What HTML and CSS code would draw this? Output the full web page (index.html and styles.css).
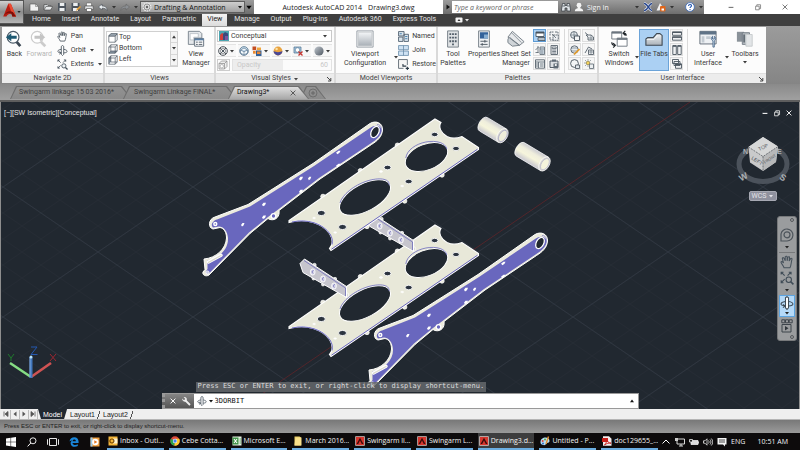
FILE: index.html
```html
<!DOCTYPE html>
<html lang="en">
<head>
<meta charset="utf-8">
<title>Autodesk AutoCAD 2014</title>
<link rel="stylesheet" href="styles.css">
</head>
<body>
<svg class="sprite" aria-hidden="true">
  <defs>
    <linearGradient id="steel" x1="0" y1="0" x2="0" y2="1"><stop offset="0" stop-color="#f4f6f8"/><stop offset="1" stop-color="#a9b0b7"/></linearGradient>
    <linearGradient id="ball" x1="0" y1="0" x2="1" y2="1"><stop offset="0" stop-color="#c3cad1"/><stop offset="1" stop-color="#4d5660"/></linearGradient>
    <linearGradient id="tube" x1="0" y1="0" x2="0" y2="1"><stop offset="0" stop-color="#c9c9cf"/><stop offset=".3" stop-color="#efeedd"/><stop offset=".6" stop-color="#f6f5dc"/><stop offset="1" stop-color="#c6c5cf"/></linearGradient>
    <pattern id="minor" x="288" y="122" width="38" height="26" patternUnits="userSpaceOnUse"><path d="M0 0L38 26M0 26L38 0" stroke="#262d37" stroke-width=".7"/></pattern>
    <pattern id="major" x="288" y="122" width="190" height="130" patternUnits="userSpaceOnUse"><path d="M0 0L190 130M0 130L190 0" stroke="#2f3741" stroke-width=".9"/></pattern>
  </defs>
  <symbol id="caret" viewBox="0 0 6 6"><path d="M1 2h4L3 4.6z" fill="currentColor"/></symbol>
  <symbol id="caret-up" viewBox="0 0 6 6"><path d="M1 4.2h4L3 1.6z" fill="currentColor"/></symbol>
  <symbol id="new" viewBox="0 0 10 10"><path d="M1 2h5.500l3 2.500V9H1z" fill="#f2f2f2" stroke="#555" stroke-width=".6"/><path d="M6.500 2v2.500h3" fill="none" stroke="#777" stroke-width=".6"/></symbol>
  <symbol id="open" viewBox="0 0 10 10"><path d="M1 8V2.500h3l1 1h3V5" fill="#d5d8da" stroke="#444" stroke-width=".6"/><path d="M1 8l2-3.500h6.700L7.600 8z" fill="#e8eaeb" stroke="#444" stroke-width=".6"/></symbol>
  <symbol id="save" viewBox="0 0 10 10"><path d="M1 1h8v8H1z" fill="#4c545d"/><path d="M2.800 1h4.500v3H2.800zM2.500 6h5v3h-5z" fill="#eceff1"/></symbol>
  <symbol id="saveas" viewBox="0 0 10 10"><path d="M.5 1h8v8h-8z" fill="#4c545d"/><path d="M2.200 1h4.500v3H2.200zM2 6h5v3H2z" fill="#eceff1"/><path d="M5 9l1-2.500L9 4l1 1-3 3z" fill="#e6a03a"/></symbol>
  <symbol id="print" viewBox="0 0 10 10"><path d="M2.500 1h5v3h-5z" fill="#fff" stroke="#555" stroke-width=".5"/><path d="M.8 4h8.400v3.500H.8z" fill="#e3e5e7" stroke="#444" stroke-width=".6"/><path d="M2.500 6.500h5V9.500h-5z" fill="#fff" stroke="#444" stroke-width=".6"/></symbol>
  <symbol id="undo" viewBox="0 0 10 10"><path d="M.5 5L4 2v2c3 0 5 1 5 4.500C8 6.700 6.500 6.200 4 6.200V8z" fill="#e9edf0" stroke="#454c54" stroke-width=".6"/></symbol>
  <symbol id="redo" viewBox="0 0 10 10"><path d="M9.500 5L6 2v2C3 4 1 5 1 8.500 2 6.700 3.500 6.200 6 6.200V8z" fill="#8b8f93" stroke="#666" stroke-width=".6"/></symbol>
  <symbol id="gear" viewBox="0 0 10 10"><circle cx="5" cy="5" r="3.700" fill="none" stroke="#f0f0f0" stroke-width="1.600" stroke-dasharray="1.500 .8"/><circle cx="5" cy="5" r="3" fill="#ddd" stroke="#555" stroke-width=".5"/><circle cx="5" cy="5" r="1.200" fill="#666"/></symbol>
  <symbol id="play" viewBox="0 0 6 6"><path d="M1.500.5L5 3 1.500 5.500z" fill="#111"/></symbol>
  <symbol id="binoc" viewBox="0 0 10 10"><path d="M1.500 1.500h2.400v2h2.200v-2h2.400L9.700 9H6V6H4v3H.3z" fill="#dfe3e6" stroke="#343a40" stroke-width=".7"/><path d="M1.500 4h2.500M6 4h2.500" stroke="#343a40" stroke-width=".7"/></symbol>
  <symbol id="user" viewBox="0 0 10 10"><circle cx="5" cy="3.200" r="2.400" fill="#f4f4f4"/><path d="M.8 9.200c0-2.200 2-2.600 2.900-2.900V5h2.600v1.300c.9.300 2.900.7 2.900 2.900z" fill="#f4f4f4"/></symbol>
  <symbol id="xchg" viewBox="0 0 10 10"><path d="M1 1.500c4 0 5 7 8 7M1 8.500c4 0 5-7 8-7" fill="none" stroke="#f0f3ff" stroke-width="2.600"/><path d="M1 1.500c4 0 5 7 8 7M1 8.500c4 0 5-7 8-7" fill="none" stroke="#27468c" stroke-width="1.500"/></symbol>
  <symbol id="a360" viewBox="0 0 10 10"><path d="M.5 8.500L4 1l2 3-2.500 4.500z" fill="#f1f1f1"/><rect x="4" y="4" width="5.500" height="5.500" rx="1" fill="#e0661a"/><path d="M5.500 6.500h2.500v2H5.500z" fill="#fff"/></symbol>
  <symbol id="help" viewBox="0 0 10 10"><circle cx="5" cy="5" r="4.400" fill="#fff" stroke="#3868b8" stroke-width=".8"/><path d="M3.500 4c0-2 3-2 3-.2 0 1-1.500 1.100-1.500 2.200M5 7v1" fill="none" stroke="#1f55b4" stroke-width="1.100"/></symbol>
  <symbol id="min" viewBox="0 0 10 10"><path d="M2 5.500h6" stroke="currentColor" stroke-width="1.400"/></symbol>
  <symbol id="restore" viewBox="0 0 10 10"><path d="M2 4h4.500v4.500H2zM3.500 4V2.200h4.700V7H6.500" fill="none" stroke="currentColor"/></symbol>
  <symbol id="close" viewBox="0 0 10 10"><path d="M2 2l6 6M8 2L2 8" stroke="currentColor" stroke-width="1.200"/></symbol>

  <symbol id="back" viewBox="0 0 20 20"><path d="M12 12l5 6" stroke="#3c4854" stroke-width="3"/><circle cx="9" cy="8" r="6.500" fill="#fff" stroke="#4b5a67" stroke-width="1.300"/><path d="M1 8l6-4.500v2.800h6v3.400H7v2.800z" fill="#1e5a73"/></symbol>
  <symbol id="fwd" viewBox="0 0 20 20"><path d="M11 12l6 6" stroke="#ccc" stroke-width="3"/><circle cx="8" cy="8" r="6.500" fill="#fff" stroke="#ccc" stroke-width="1.300"/><path d="M17 8l-6-4.500v2.800H5v3.400h6v2.800z" fill="#c4c4c4"/></symbol>
  <symbol id="pan" viewBox="0 0 12 12"><path d="M3.500 11C3 9 1 7.500.8 6 1.500 5.200 2.600 6 3 7L2 2.800c.6-1 1.400-.4 1.700.4L4.500 5V1.500c.8-.9 1.600-.4 1.600.4V5l.7-3.200c.8-.7 1.500-.2 1.400.6L7.800 5.200l1.400-2.300c1-.3 1.300.4 1 1.100C9.500 6 9.800 8.500 8.500 11z" fill="var(--palm, #fff)" stroke="#46515b" stroke-width=".9"/></symbol>
  <symbol id="orbit" viewBox="0 0 12 12"><path d="M4.700 1.500L6 .5l1.300 1v8.700L6 11.500l-1.300-1.300z" fill="#fff" stroke="#3f4b56" stroke-width=".9"/><path d="M4.500 4.700C0 5.500-.5 8 4 8.600M7.500 4.700c4.500.8 5 3.600 0 3.900M2.500 7.200l2 1.400-2 1.400" fill="none" stroke="#3f4b56" stroke-width=".9"/></symbol>
  <symbol id="extents" viewBox="0 0 12 12"><path d="M1 1l3 3M1 3V1h2M9.500 1L6.500 4M7.500 1h2v2M1 10l3-3M1 8v2h2" fill="none" stroke="#3f4b56" stroke-width=".9"/><circle cx="7.500" cy="7.500" r="2.300" fill="var(--palm, #eef3f6)" stroke="#3f4b56" stroke-width=".9"/><path d="M9.200 9.200l2.300 2.300" stroke="#3f4b56" stroke-width="1.400"/></symbol>
  <symbol id="cube-top" viewBox="0 0 10 10"><path d="M.8 3l2-2.200h6.400v6.200L7.200 9.200H.8zM.8 3h6.400v6.200M7.200 3l2-2.200" fill="#fff" stroke="#4d5862" stroke-width=".7"/><path d="M.8 3l2-2.200h6.400L7.200 3z" fill="#a9b6c1" stroke="#4d5862" stroke-width=".7"/></symbol>
  <symbol id="cube-bottom" viewBox="0 0 10 10"><path d="M.8 9.200l2-2.200h6.400l-2 2.200z" fill="#8996a3"/><path d="M.8 3l2-2.200h6.400v6.200L7.200 9.200H.8zM.8 3h6.400v6.200M7.200 3l2-2.200M2.800.8v6.200h6.400M2.800 7l-2 2.200" fill="none" stroke="#4d5862" stroke-width=".7"/></symbol>
  <symbol id="cube-left" viewBox="0 0 10 10"><path d="M.8 3l2-2.200V7l-2 2.200z" fill="#8996a3"/><path d="M.8 3l2-2.200h6.400v6.200L7.200 9.200H.8zM.8 3h6.400v6.200M7.200 3l2-2.200M2.800.8v6.200h6.400" fill="none" stroke="#4d5862" stroke-width=".7"/></symbol>
  <symbol id="viewmgr" viewBox="0 0 20 20"><path d="M1.500 1.500h12.500l2.500 2.500v5H8v7H1.500z" fill="#e5e8eb" stroke="#77818a"/><path d="M3.500 4h9v4h-5v3h-4z" fill="#fff" stroke="#9aa3ab" stroke-width=".6"/><path d="M8.500 9.500h10v8.500h-10z" fill="#fff" stroke="#5c6a77"/><path d="M8.500 9.500h10v2h-10z" fill="#5a7fa5"/><path d="M10 13.500h2M13 13.500h4M10 16h2M13 16h4" stroke="#4a5661"/></symbol>
  <symbol id="concept" viewBox="0 0 10 10"><path d="M0 0h10v10H0z" fill="#4ba5b0"/><path d="M1 4l2-2 2 1v6H1z" fill="#d0403b"/><path d="M4 3l2-2 3 1.500V9H4z" fill="#3b4a7c"/><path d="M6 5h3v4H6z" fill="#7a55a0"/></symbol>
  <symbol id="wheel" viewBox="0 0 10 10"><circle cx="5" cy="5" r="4.300" fill="#fff" stroke="#333b43" stroke-width=".9"/><circle cx="5" cy="5" r="1.200" fill="#4b555e"/><path d="M2 2l1.800 1.800M8 2L6.200 3.800M2 8l1.800-1.800M8 8L6.200 6.200" stroke="#333b43" stroke-width=".8"/><circle cx="5" cy="5" r="2.600" fill="none" stroke="#333b43" stroke-width=".5"/></symbol>
  <symbol id="bluecube" viewBox="0 0 10 10"><circle cx="5" cy="5" r="4.400" fill="#c7dced" stroke="#5c7890" stroke-width=".8"/><path d="M1.500 4L5 2l3.500 2v3L5 9 1.500 7zM1.500 4L5 5.700 8.500 4M5 5.700V9" fill="#f3f8fc" stroke="#5c7890" stroke-width=".7"/></symbol>
  <symbol id="blocks" viewBox="0 0 10 10"><path d="M.5.5h3.700v3.700H.5z" fill="#c34e21"/><path d="M5 1.500h4v2.700H5z" fill="#f0a53c"/><path d="M1 5h2.700v2.700H1z" fill="#e8892d"/><path d="M4 4.500h5.500V10H4z" fill="#315f97"/><path d="M5 5.500h3.500V8H5z" fill="#e78633"/></symbol>
  <symbol id="sphere" viewBox="0 0 10 10"><circle cx="5" cy="5" r="4.400" fill="#e9a33f"/><path d="M.6 5a4.400 4.400 0 0 0 8.800 0C7 6.500 3 6.500.6 5z" fill="#4b4996"/><circle cx="3.600" cy="3" r="1.200" fill="#fbe2a8"/></symbol>
  <symbol id="xray" viewBox="0 0 10 10"><path d="M1 1h7v6H1z" fill="#a8cbe6" stroke="#4b6e8b" stroke-width=".7"/><circle cx="4.500" cy="4" r="2.300" fill="#fff" stroke="#4b6e8b" stroke-width=".6"/><path d="M5.500 5.500l4 4M9.500 5.500l-4 4" stroke="#c5352f" stroke-width="1.300"/></symbol>
  <symbol id="grayball" viewBox="0 0 10 10"><circle cx="5" cy="5" r="4.600" fill="url(#ball)"/></symbol>
  <symbol id="opac" viewBox="0 0 10 10"><path d="M1 3.500L3.500 1H9v5.500L6.500 9H1zM1 3.500h5.500V9M6.500 3.500L9 1" fill="#eee" stroke="#8a8a8a" stroke-width=".7"/><circle cx="3.800" cy="6.200" r="1.700" fill="#fff" stroke="#999" stroke-width=".6"/></symbol>
  <symbol id="vport" viewBox="0 0 20 20"><path d="M1 1h18v18H1z" fill="#fff" stroke="#8e979f"/><path d="M2.500 2.500h15v15h-15z" fill="url(#steel)" stroke="#b0b6bb" stroke-width=".6"/></symbol>
  <symbol id="named" viewBox="0 0 10 10"><path d="M.5.500h5v4h-5zM5.500 3h4v6.500h-4zM.5 5.500h4v4h-4z" fill="#dbe5ed" stroke="#506070" stroke-width=".8"/><path d="M6.500 5h2M6.500 7h2M1.500 2.500h2" stroke="#3977a8" stroke-width=".8"/></symbol>
  <symbol id="join" viewBox="0 0 10 10"><path d="M.5.500h9v3.800h-9zM.5 5.500h9v4h-9z" fill="#cfe2f3" stroke="#6688a6" stroke-width=".7"/><path d="M5 .5v9" stroke="#6688a6" stroke-width=".7"/></symbol>
  <symbol id="vrestore" viewBox="0 0 10 10"><path d="M8.500 5.500v-5h-8v8H5" fill="#f6f6f6" stroke="#5b666f" stroke-width=".8"/><path d="M4.500 4.500V6.500h3M7 8.500h3M8.500 7v3" stroke="#2c3a46" fill="none"/></symbol>
  <symbol id="toolpal" viewBox="0 0 20 20"><path d="M4 1h12v18H4z" fill="#e0e3e5" stroke="#717a82"/><path d="M6 3.500h2v2H6zM9 3.500h2v2H9zM12 3.500h2v2h-2zM6 7.500h2v2H6zM9 7.500h2v2H9zM12 7.500h2v2h-2zM6 11.500h2v2H6zM9 11.500h2v2H9zM12 11.500h2v2h-2zM9 15h2v2H9z" fill="#4f5b66"/></symbol>
  <symbol id="props" viewBox="0 0 20 20"><path d="M4 1h12v18H4z" fill="#f0f2f4" stroke="#717a82"/><path d="M5.500 2.500h9v7h-9z" fill="#33629a"/><path d="M10 5h4.500v4.500H10z" fill="#87add0"/><path d="M6 12.500h8M6 16h8M11 11v3M8 14.500v3" stroke="#47525c"/></symbol>
  <symbol id="sheets" viewBox="0 0 20 20"><path d="M6 1.500L19 13l-5 4L1 8z" fill="#e7e9eb" stroke="#707a83"/><path d="M1 11c0-3 3-3 4-1l9 7-8 1-5-4z" fill="#cfd4d8" stroke="#707a83"/><path d="M5 3l11 11M3 9l9 7" stroke="#707a83" stroke-width=".8"/></symbol>
  <symbol id="p1" viewBox="0 0 10 10"><path d="M1 1h8v4.500H1z" fill="#fff" stroke="#46515b" stroke-width=".9"/><path d="M1 1h8v1.500H1z" fill="#46515b"/><path d="M3 6.500h7v3H3z" fill="#b8c1c8" stroke="#46515b" stroke-width=".8"/></symbol>
  <symbol id="p2" viewBox="0 0 10 10"><path d="M1 4.500V1h3.500M6 1h3v2.500M1 6v3h3M4 4h5.300v5.300H4z" fill="#eef0f2" stroke="#59646e" stroke-width=".9" stroke-dasharray="2 .5"/><path d="M3 3l4 4" stroke="#59646e" stroke-width=".8"/></symbol>
  <symbol id="p3" viewBox="0 0 10 10"><path d="M5 2h4.500v7.500H5z" fill="#dce8f2" stroke="#59646e" stroke-width=".8"/><path d="M5 4h4.500M6 6h2.500M6 8h2.500M.5 5l3-3M.5 7.500h3M3 1v7" stroke="#59646e" stroke-width=".8"/></symbol>
  <symbol id="p4" viewBox="0 0 10 10"><path d="M2 .5h6.500v9H2z" fill="#f0f1f3" stroke="#59646e" stroke-width=".9"/><path d="M3.200 2h4v1.500h-4zM3.200 5h4M3.200 6.500h4M3.200 8h4" stroke="#59646e" stroke-width=".8" fill="#fff"/></symbol>
  <symbol id="p5" viewBox="0 0 10 10"><path d="M.5.800h9v8.400h-9z" fill="#edf0f2" stroke="#59646e" stroke-width=".9"/><path d="M.5 3h9M3.500 3v6M.5 5h3M.5 7h3M5 5h3.500M5 7h3.500" stroke="#59646e" stroke-width=".8"/></symbol>
  <symbol id="p6" viewBox="0 0 10 10"><path d="M1 2h8v6.500H1z" fill="#dce0e3" stroke="#46515b" stroke-width=".9"/><path d="M3 .5h4v2H3zM4.500 4.500h4.700v5H4.500z" fill="#5f6b75"/><circle cx="6.800" cy="6" r="1.100" fill="#fff"/></symbol>
  <symbol id="q1" viewBox="0 0 10 10"><circle cx="4" cy="4" r="3.400" fill="#e6ebef" stroke="#59646e" stroke-width=".9"/><path d="M.6 4h6.800M4 .6v6.800" stroke="#59646e" stroke-width=".6"/><path d="M4.500 5h5v4.500h-5z" fill="#f3f5f6" stroke="#46515b" stroke-width=".9"/></symbol>
  <symbol id="q2" viewBox="0 0 10 10"><path d="M1 1.500l3 2.500M2 4h5l2.500 2v3H4V6z" fill="#eef0f2" stroke="#59646e" stroke-width=".9"/><path d="M4.500 7h5M7 4v5" stroke="#59646e" stroke-width=".6"/></symbol>
  <symbol id="q3" viewBox="0 0 10 10"><circle cx="4.500" cy="4.500" r="3.700" fill="#e6ebef" stroke="#59646e" stroke-width=".9"/><path d="M1 3h7M1 6h7" stroke="#59646e" stroke-width=".6"/><path d="M4 9.500L9.500 4" stroke="#e19b2b" stroke-width="1.700"/></symbol>
  <symbol id="q4" viewBox="0 0 10 10"><path d="M1 8l3.500-6L8 4M4.500 5h5v4.500h-5z" fill="#eef0f2" stroke="#59646e" stroke-width=".9"/><path d="M4.500 7h5M7 5v4" stroke="#59646e" stroke-width=".6"/></symbol>
  <symbol id="q5" viewBox="0 0 10 10"><circle cx="4.500" cy="4.500" r="3.900" fill="#f3f5f6" stroke="#46515b" stroke-width=".9"/><path d="M5.500 6h4v3.500h-4z" fill="#dfe5ea" stroke="#46515b" stroke-width=".8"/></symbol>
  <symbol id="q6" viewBox="0 0 10 10"><circle cx="4" cy="4" r="1.800" fill="#f4d35e" stroke="#7b6b2d" stroke-width=".6"/><path d="M4 .3v1.200M4 6.500v1.200M.3 4h1.200M1.300 1.300l.9.900M6.700 1.300l-.9.900M1.300 6.700l.9-.9" stroke="#59646e" stroke-width=".8"/><path d="M5.500 5h4v4.500h-4z" fill="#eceff1" stroke="#59646e" stroke-width=".8"/></symbol>
  <symbol id="switch" viewBox="0 0 20 20"><path d="M2 2h11v8H2z" fill="#fff" stroke="#6b757e"/><path d="M2 2h11v2H2z" fill="#6b757e"/><path d="M8 9h11v9H8z" fill="#fff" stroke="#6b757e"/><path d="M8 9h11v2H8z" fill="#6b757e"/><path d="M15 3.500c2.500 0 3 1 3 3M17 1l-2.500 2.500L17 6M5.500 17C3 17 2 16 2 13.500M3.500 14.500L6 17l-2.500 2.500" fill="none" stroke="#20262b" stroke-width="1.300"/></symbol>
  <symbol id="ftabs" viewBox="0 0 20 20"><path d="M1 17v-7l2-1.500h6L13 4h3.500L19 6v11z" fill="url(#steel)" stroke="#3c4650" stroke-width="1.200"/><path d="M2 10.500h8l4-4.500" fill="none" stroke="#fff" stroke-width=".8"/></symbol>
  <symbol id="th" viewBox="0 0 10 10"><path d="M.5.800h9v3.500h-9zM.5 5.700h9v3.500h-9z" fill="#eef0f2" stroke="#4d5862" stroke-width=".9"/><path d="M.5 1.500h9M.5 6.400h9" stroke="#4d5862"/></symbol>
  <symbol id="tv" viewBox="0 0 10 10"><path d="M.8.500h3.500v9H.8zM5.700.5h3.500v9H5.700z" fill="#eef0f2" stroke="#4d5862" stroke-width=".9"/><path d="M.8 1.300h3.500M5.700 1.300h3.500" stroke="#4d5862"/></symbol>
  <symbol id="tc" viewBox="0 0 10 10"><path d="M.5.500h6v4h-6zM2 2.500h6v4H2zM3.500 4.800h6v4.500h-6z" fill="#eef0f2" stroke="#4d5862" stroke-width=".9"/><path d="M3.500 5.500h6" stroke="#4d5862"/></symbol>
  <symbol id="uiface" viewBox="0 0 20 20"><path d="M1 1.500h18v14H1z" fill="#eef1f4" stroke="#5b6772"/><path d="M1 1.500h18V5H1z" fill="#5f7387"/><path d="M3 7h3v7H3zM8 7h5v3H8z" fill="#c3cbd2"/><path d="M15.500 19v-7c-2.500-1-2-4-.5-5v3h2V7c2 1 2 4 0 5v7z" fill="#d6e3ee" stroke="#406184" stroke-width=".9"/></symbol>
  <symbol id="tbars" viewBox="0 0 20 20"><path d="M1 2h8v11H1z" fill="#8a9299"/><path d="M7 3h8v13H7z" fill="#b5bbc0" stroke="#737c84"/><path d="M11 5h7v13h-7z" fill="#e2e5e7" stroke="#c5c9cc"/><path d="M9 5v9" stroke="#4d5862" stroke-width="1.500"/></symbol>
  <symbol id="launcher" viewBox="0 0 6 6"><path d="M1 1l3.500 3.500M4.800 2v3H2" fill="none" stroke="#333" stroke-width=".9"/></symbol>
  <symbol id="ribmin" viewBox="0 0 8 6"><rect x=".5" y=".5" width="7" height="5" rx="1" fill="#f2f2f2"/><path d="M2.500 4h3L4 2z" fill="#333"/></symbol>

  <symbol id="first" viewBox="0 0 8 8"><path d="M2 1.500v5M6 1.500L3 4l3 2.500z" fill="#555" stroke="#555" stroke-width=".8"/></symbol>
  <symbol id="prev" viewBox="0 0 8 8"><path d="M5.500 1.500L2.500 4l3 2.500z" fill="#555"/></symbol>
  <symbol id="next" viewBox="0 0 8 8"><path d="M2.500 1.500L5.500 4l-3 2.500z" fill="#555"/></symbol>
  <symbol id="last" viewBox="0 0 8 8"><path d="M6 1.500v5M2 1.500L5 4 2 6.500z" fill="#555" stroke="#555" stroke-width=".8"/></symbol>
  <symbol id="wrench" viewBox="0 0 10 10"><path d="M4.500 4.500L9 9" stroke="#eee" stroke-width="1.800"/><path d="M1 2.500L3 4.300 4.300 3 2.600 1c2-.5 4 1 3 3.500S1 5 1 2.500z" fill="#eee"/></symbol>

  <symbol id="nw" viewBox="0 0 14 14"><path d="M1 13V6a6 6 0 1 1 6 7z" fill="none" stroke="#4d545b" stroke-width="1.200"/><circle cx="7" cy="6.800" r="3" fill="none" stroke="#4d545b" stroke-width="1.200"/></symbol>
  <symbol id="showm" viewBox="0 0 12 14"><path d="M.8.800h3v3h-3zM4.500.800h3v3h-3zM8.200.800h3v3h-3zM1 5.500h9v7.500H1z" fill="none" stroke="#3d444b"/><path d="M4 7l3.500 2.200L4 11.500z" fill="#30363c"/></symbol>

  <symbol id="win" viewBox="0 0 10 10"><path d="M0 1.400L4.600.8v3.900H0zM5.100.7L10 0v4.700H5.100zM0 5.200h4.600v4L0 8.600zM5.100 5.200H10V10l-4.900-.7z" fill="#fff"/></symbol>
  <symbol id="search" viewBox="0 0 10 10"><circle cx="6" cy="3.800" r="3" fill="none" stroke="#fff" stroke-width=".9"/><path d="M3.800 6L.6 9.400" stroke="#fff"/></symbol>
  <symbol id="tview" viewBox="0 0 12 10"><path d="M2.500 1.500h7v7h-7zM1 2.500H.5v5H1M11 2.500h.5v5H11" fill="none" stroke="#fff" stroke-width=".9"/></symbol>
  <symbol id="edge" viewBox="0 0 10 10"><path d="M.5 4.500C1 1.500 3 .3 5.200.3 8 .3 9.600 2.300 9.600 5v.9H3.500c.2 2.200 3.200 2.600 5.300 1.400v1.800C5.600 10.700 1.600 9.600 1.600 6.200c0-1.300.8-2.400 2-3C2.300 3.300 1.200 3.800.5 4.500zM3.600 4.300h3.300C6.900 2 3.800 2 3.600 4.300z" fill="#1a86d9"/></symbol>
  <symbol id="media" viewBox="0 0 10 10"><path d="M.5.500h9v9h-9z" fill="#f0a040"/><path d="M.5.500h2v9h-2z" fill="#9ccbe8"/><circle cx="5.300" cy="5" r="3.200" fill="#fff"/><path d="M4.300 3.200L7.300 5l-3 1.800z" fill="#e5761b"/></symbol>
  <symbol id="outlook" viewBox="0 0 10 10"><path d="M.5.500h9v9h-9z" fill="#f4b73c"/><path d="M5 2.500h4.500v5H5z" fill="#fff3cf"/><circle cx="3.900" cy="5" r="2" fill="none" stroke="#7b4a00" stroke-width="1.200"/></symbol>
  <symbol id="chrome" viewBox="0 0 10 10"><circle cx="5" cy="5" r="4.700" fill="#dd4b3e"/><path d="M5 5L.9 2.700a4.700 4.700 0 0 0 3.600 7z" fill="#2ba24c"/><path d="M5 5h4.700a4.700 4.700 0 0 1-5.200 4.700z" fill="#fccb2f"/><path d="M5 5V2.800h4.200A4.700 4.700 0 0 1 9.700 5z" fill="#fccb2f"/><circle cx="5" cy="5" r="2.200" fill="#fff"/><circle cx="5" cy="5" r="1.700" fill="#4386ee"/></symbol>
  <symbol id="excel" viewBox="0 0 10 10"><path d="M.5.500h9v9h-9z" fill="#e8f3e4"/><path d="M.5 1.500h6v7h-6z" fill="#3f9347"/><path d="M2 3l3 4M5 3L2 7" stroke="#fff" stroke-width="1.100"/><path d="M7.500 3H9M7.500 5H9M7.500 7H9" stroke="#3f9347" stroke-width=".8"/></symbol>
  <symbol id="folder" viewBox="0 0 10 10"><path d="M1.500.500h5l1.500 1v8H1.500z" fill="#e7cb65"/><path d="M2.500 1.500h6v8h-7z" fill="#f9e18b"/></symbol>
  <symbol id="acad" viewBox="0 0 10 10"><path d="M.3.300h9.400v9.400H.3z" fill="#e9d3d0"/><path d="M1 1h8v8H1z" fill="#d5352d"/><path d="M1.500 8L5 1.800 8.500 8H6.800L5 4.500 3.200 8z" fill="#3a0c0a"/></symbol>
  <symbol id="paint" viewBox="0 0 10 10"><path d="M.5 6c0-3 2.500-4.500 5-4.500S9.500 3 9.500 5 7 6.500 6.500 7.500 5 9.500 3 9 .5 8 .5 6z" fill="#b5dcf5"/><circle cx="2.700" cy="5" r="1" fill="#d9463c"/><circle cx="5" cy="3.500" r="1" fill="#58a942"/><circle cx="3" cy="7.500" r=".9" fill="#2761b8"/><path d="M8.500.5L6 8" stroke="#e59232" stroke-width="1.400"/></symbol>
  <symbol id="pdf" viewBox="0 0 10 10"><path d="M1 .3h6l2.500 2.500v7H1z" fill="#f5eeee"/><path d="M0 2h6v4H0z" fill="#c9211e"/><path d="M2.500 9C4.500 7 5 4.500 4.800 2.800 5 5.500 6.500 7 9 7.200 7 6.800 4.500 7.300 2.500 9z" fill="none" stroke="#c9211e" stroke-width=".9"/></symbol>
  <symbol id="chev" viewBox="0 0 10 10"><path d="M1.500 6.500L5 3l3.500 3.500" fill="none" stroke="#fff"/></symbol>
  <symbol id="net" viewBox="0 0 10 10"><path d="M2 2h7.500v5H2zM4 9h4M6 7v2" fill="none" stroke="#eee" stroke-width=".9"/><path d="M0 1h3v3H0z" fill="#ccc"/></symbol>
  <symbol id="batt" viewBox="0 0 10 10"><path d="M2 3.500h7v4H2z" fill="#ddd" stroke="#eee" stroke-width=".8"/><path d="M9.500 4.500v2M.5 2.500h3v2.500h-3z" stroke="#eee" fill="#222" stroke-width=".8"/></symbol>
  <symbol id="sound" viewBox="0 0 10 10"><path d="M.5 3.800H2L4 1.800v6.400L2 6.200H.5zM5.500 3.500c.8 1 .8 2 0 3M7 2.500c1.300 1.500 1.300 3.500 0 5M8.300 1.500c2 2 2 5 0 7" fill="none" stroke="#eee" stroke-width=".8"/></symbol>
  <symbol id="action" viewBox="0 0 10 10"><path d="M.5 1h9v6.500H8v2l-2-2H.5z" fill="#f4f4f4"/><path d="M2 3h6M2 5h6" stroke="#222" stroke-width=".8"/></symbol>
</svg>

<div class="app">
  <header class="top">
    <button class="app-menu" aria-label="Application menu">
      <svg viewBox="0 0 24 24"><path d="M3 17L8.500 3h2.800L17 17h-4l-1-2.800c-2-.9-4-.3-5.500 2.800z" fill="#b81d12"/><path d="M8.500 3h2.800L17 17h-3.200z" fill="#ea4a31"/><path d="M3 17c2.500-3.500 5-5 9-3.300l1 3.300h4l-3.500-5C9 10 6 12 3 17z" fill="#7e0e08"/><path d="M18.500 11h3.500l-1.800 2.200z" fill="#222"/></svg>
    </button>
    <div class="top-rows">
      <div class="titlebar">
        <div class="quick">
          <button aria-label="New"><svg><use href="#new"/></svg></button>
          <button aria-label="Open"><svg><use href="#open"/></svg></button>
          <button aria-label="Save"><svg><use href="#save"/></svg></button>
          <button aria-label="Save as"><svg><use href="#saveas"/></svg></button>
          <button aria-label="Plot"><svg><use href="#print"/></svg></button>
          <button aria-label="Undo"><svg><use href="#undo"/></svg></button>
          <button class="slim" aria-label="Undo list"><svg><use href="#caret"/></svg></button>
          <button aria-label="Redo"><svg><use href="#redo"/></svg></button>
          <button class="slim" aria-label="Redo list"><svg><use href="#caret"/></svg></button>
        </div>
        <div class="workspace">
          <svg class="i10"><use href="#gear"/></svg>
          <select aria-label="Workspace"><option>Drafting &amp; Annotation</option></select>
          <svg class="i6"><use href="#caret"/></svg>
        </div>
        <button class="qat-more" aria-label="Customize"><svg class="i8"><use href="#caret"/></svg></button>
        <div class="doc-title"><span>Autodesk AutoCAD 2014</span><span>Drawing3.dwg</span></div>
        <div class="infocenter">
          <button class="expander" aria-label="Collapse search"><svg class="i6"><use href="#play"/></svg></button>
          <input type="text" placeholder="Type a keyword or phrase" aria-label="Search">
          <svg class="i10"><use href="#binoc"/></svg>
          <button class="signin"><svg class="i10"><use href="#user"/></svg>Sign In<svg class="i6 push"><use href="#caret"/></svg></button>
          <svg class="i10"><use href="#xchg"/></svg>
          <svg class="i10"><use href="#a360"/></svg>
          <svg class="i6"><use href="#caret"/></svg>
          <svg class="i10 help"><use href="#help"/></svg>
          <svg class="i6"><use href="#caret"/></svg>
        </div>
        <div class="win-controls">
          <button aria-label="Minimize"><svg class="i8"><use href="#min"/></svg></button>
          <button aria-label="Restore"><svg class="i8"><use href="#restore"/></svg></button>
          <button aria-label="Close"><svg class="i8"><use href="#close"/></svg></button>
        </div>
      </div>
      <nav class="menu">
        <button>Home</button><button>Insert</button><button>Annotate</button><button>Layout</button><button>Parametric</button><button class="on">View</button><button>Manage</button><button>Output</button><button>Plug-ins</button><button>Autodesk 360</button><button>Express Tools</button>
        <button class="rib" aria-label="Minimize ribbon"><svg class="i8"><use href="#ribmin"/></svg><svg class="i6"><use href="#caret"/></svg></button>
      </nav>
    </div>
  </header>

  <section class="ribbon">
    <div class="panel p-nav">
      <div class="body">
        <button class="big w24"><svg><use href="#back"/></svg>Back</button>
        <button class="big w24 off"><svg><use href="#fwd"/></svg>Forward</button>
        <div class="stack lead">
          <button class="row"><svg><use href="#pan"/></svg>Pan</button>
          <button class="row"><svg><use href="#orbit"/></svg>Orbit<svg class="i6"><use href="#caret"/></svg></button>
          <button class="row"><svg><use href="#extents"/></svg>Extents<svg class="i6"><use href="#caret"/></svg></button>
        </div>
      </div>
      <h2>Navigate 2D</h2>
    </div>
    <div class="panel p-views">
      <div class="body">
        <div class="gallery">
          <div class="names">
            <button><svg><use href="#cube-top"/></svg>Top</button>
            <button><svg><use href="#cube-bottom"/></svg>Bottom</button>
            <button><svg><use href="#cube-left"/></svg>Left</button>
          </div>
          <div class="scroll">
            <button aria-label="Up"><svg class="i6"><use href="#caret-up"/></svg></button>
            <button aria-label="Down"><svg class="i6"><use href="#caret"/></svg></button>
            <button aria-label="More"><svg class="i6"><use href="#caret"/></svg></button>
          </div>
        </div>
        <button class="big grow"><svg><use href="#viewmgr"/></svg>View<br>Manager</button>
      </div>
      <h2>Views</h2>
    </div>
    <div class="panel p-style">
      <div class="body col">
        <div class="combo"><svg class="i10"><use href="#concept"/></svg><select aria-label="Visual style"><option>Conceptual</option></select><svg class="i6"><use href="#caret"/></svg></div>
        <div class="tools">
          <button aria-label="Edges"><svg class="i10"><use href="#wheel"/></svg><svg class="i6"><use href="#caret"/></svg></button>
          <button aria-label="Isolines"><svg class="i10"><use href="#bluecube"/></svg></button>
          <button aria-label="Materials"><svg class="i10"><use href="#blocks"/></svg><svg class="i6"><use href="#caret"/></svg></button>
          <button aria-label="Faces"><svg class="i10"><use href="#sphere"/></svg><svg class="i6"><use href="#caret"/></svg></button>
          <button aria-label="Shadows"><svg class="i10"><use href="#xray"/></svg><svg class="i6"><use href="#caret"/></svg></button>
          <button aria-label="Shading"><svg class="i10"><use href="#grayball"/></svg><svg class="i6"><use href="#caret"/></svg></button>
        </div>
        <div class="opacity"><button aria-label="X-ray"><svg class="i10"><use href="#opac"/></svg></button><div class="meter"><span>Opacity</span><output>60</output></div></div>
      </div>
      <h2>Visual Styles<svg class="i6"><use href="#caret"/></svg><svg class="i6 launch"><use href="#launcher"/></svg></h2>
    </div>
    <div class="panel p-port">
      <div class="body">
        <button class="big grow"><svg><use href="#vport"/></svg>Viewport<br>Configuration</button>
        <svg class="i6 drop"><use href="#caret"/></svg>
        <div class="stack">
          <button class="row"><svg><use href="#named"/></svg>Named</button>
          <button class="row"><svg><use href="#join"/></svg>Join</button>
          <button class="row"><svg><use href="#vrestore"/></svg>Restore</button>
        </div>
      </div>
      <h2>Model Viewports</h2>
    </div>
    <div class="panel p-pal">
      <div class="body">
        <button class="big w30"><svg><use href="#toolpal"/></svg>Tool<br>Palettes</button>
        <button class="big w32"><svg><use href="#props"/></svg>Properties</button>
        <button class="big w32"><svg><use href="#sheets"/></svg>Sheet Set<br>Manager</button>
        <div class="tiles">
          <button class="on" aria-label="Command line"><svg><use href="#p1"/></svg></button><button aria-label="Markup"><svg><use href="#p2"/></svg></button>
          <button aria-label="Layers"><svg><use href="#p3"/></svg></button><button aria-label="Calculator"><svg><use href="#p4"/></svg></button>
          <button aria-label="References"><svg><use href="#p5"/></svg></button><button aria-label="Design center"><svg><use href="#p6"/></svg></button>
        </div>
        <div class="tiles ruled">
          <button aria-label="Render"><svg><use href="#q1"/></svg></button><button aria-label="Visual styles"><svg><use href="#q2"/></svg></button>
          <button aria-label="Materials editor"><svg><use href="#q3"/></svg></button><button aria-label="Sun"><svg><use href="#q4"/></svg></button>
          <button aria-label="Environment"><svg><use href="#q5"/></svg></button><button aria-label="Lights"><svg><use href="#q6"/></svg></button>
        </div>
      </div>
      <h2>Palettes</h2>
    </div>
    <div class="panel p-ui">
      <div class="body">
        <button class="big w32"><svg><use href="#switch"/></svg>Switch<br>Windows</button>
        <svg class="i6 drop"><use href="#caret"/></svg>
        <button class="big w30 on"><svg><use href="#ftabs"/></svg>File Tabs</button>
        <div class="tiles single">
          <button aria-label="Tile horizontally"><svg><use href="#th"/></svg></button>
          <button aria-label="Tile vertically"><svg><use href="#tv"/></svg></button>
          <button aria-label="Cascade"><svg><use href="#tc"/></svg></button>
        </div>
        <button class="big w38 ruled"><svg><use href="#uiface"/></svg>User<br>Interface</button>
        <svg class="i6 drop"><use href="#caret"/></svg>
        <button class="big w32"><svg><use href="#tbars"/></svg>Toolbars<svg class="i6"><use href="#caret"/></svg></button>
      </div>
      <h2>User Interface<svg class="i6 launch"><use href="#launcher"/></svg></h2>
    </div>
  </section>

  <div class="filetabs">
    <button class="ft">Swingarm linkage 15 03 2016*</button>
    <button class="ft">Swingarm Linkage FINAL*</button>
    <button class="ft on">Drawing3*<svg class="i8"><use href="#close"/></svg></button>
    <button class="ft plus" aria-label="New tab"><svg viewBox="0 0 10 10"><circle cx="5" cy="5" r="4" fill="none" stroke="#666" stroke-width=".8"/><path d="M5 3v4M3 5h4" stroke="#666"/></svg></button>
  </div>

  <main class="viewport">
    <svg class="model" viewBox="0 102 800 307" preserveAspectRatio="xMidYMid slice" role="img" aria-label="Swingarm model, isometric view">
      <path d="M0 102h800v307H0z" fill="#212830"/>
      <path d="M0 102h800v307H0z" fill="url(#minor)"/>
      <path d="M0 102h800v307H0z" fill="url(#major)"/>
      <path d="M240 409L690 102" stroke="#5f2429" stroke-width=".8"/>
      <defs>
        <g id="plate">
          <g fill="#e9e9dc" stroke="#fff" stroke-width=".8">
            <circle cx="323" cy="196.500" r="2.300"/><circle cx="360.500" cy="170.800" r="2.300"/><circle cx="397.500" cy="145.300" r="2.300"/>
            <circle cx="367" cy="226.500" r="2.200"/><circle cx="404.700" cy="201" r="2.200"/><circle cx="442" cy="175" r="2.200"/>
          </g>
          <path d="M435 119L441 122.500C438 127 441 133 447 136.500 452 139 457 138.500 462 136.500L478.500 147.500V149.500L331 250.500 329.500 248.500C333 245 333 239 329.500 233.500 323 223.500 306 217.500 289 222.500V220.500z" fill="#e8e8d9" stroke="#fff" stroke-width="1.100"/>
          <path d="M477.500 149.200L331.500 249.200M292 222c15-3.500 31 1.500 38 12 2 3.500 3 6.500 2 10.500" fill="none" stroke="#5a58b8" stroke-width=".9"/>
          <g fill="#212830" stroke="#fff">
            <ellipse cx="365" cy="197.500" rx="28" ry="13.500" transform="rotate(-28 365 197.500)"/>
            <ellipse cx="426.500" cy="157" rx="22.300" ry="12.800" transform="rotate(-22 426.500 157)"/>
          </g>
          <path d="M340 203c2-8 14-18 27-22 11-3.500 23-3 22 4M405.800 158c1-8 10-14 20-16 11-2 20 1 21 7" fill="none" stroke="#6b69bd" stroke-width=".8"/>
          <g fill="#2c3440" stroke="#fff" stroke-width=".9">
            <ellipse cx="321.300" cy="213" rx="4" ry="2.600"/><ellipse cx="342.500" cy="227" rx="4" ry="2.600"/><ellipse cx="387.500" cy="167.500" rx="3.500" ry="2.300"/><ellipse cx="408.700" cy="181.500" rx="3.500" ry="2.300"/><ellipse cx="434.700" cy="134.500" rx="3.300" ry="2.200"/><ellipse cx="456" cy="148.500" rx="3.300" ry="2.200"/>
          </g>
          <path d="M312.500 218l1.500-1 1.700 1-1.500 1zM333.500 232.500l1.500-1 2 1-1.800 1zM379 171.500l2-1.300 2 1.300-2 1.300zM400.500 186l1.500-1 2 1-1.800 1z" fill="#fff" stroke="#fff" stroke-width=".4"/>
        </g>
        <g id="arm">
          <path d="M215 217L248 204.500 313 163.500 370 123.500C376 120 383 123 382.500 130 382 137 377 141 371.500 144.500L320 179 279 210.500C280 216 276 221 270 219.500L268 218.500 250 233.500 209 275C206 277 202 275 203 272L205 269.500 204 259C216 258 226 249 226.500 238 226.500 232 224 228.500 220 227.500L213 229C208 228 208 219 215 217z" fill="#ecebdd" stroke="#fff" stroke-width="1"/>
          <path d="M217 219.500L250 206.500 314 166 370 128C376 123.500 382 126 381.500 131 381 136 376 140 371 143.300L319 178 277.500 210 268 217 249 232.500 208.500 274 205.500 272 207.500 269V260.500C220 257 228.500 249 228 238 227.500 231 223.500 226.500 219 226.500L213 227.500C210 225 213 220.500 217 219.500z" fill="#6967be"/>
          <path d="M377 124.500c5 0 5 5 3 9.500" fill="none" stroke="#6967be" stroke-width=".6"/>
          <ellipse cx="375" cy="132" rx="3.700" ry="6" transform="rotate(28 375 132)" fill="#212830" stroke="#fff" stroke-width="1.300"/>
          <circle cx="215.300" cy="224" r="2.200" fill="#fff"/><circle cx="215.300" cy="224" r=".8" fill="#6967be"/>
          <circle cx="273.500" cy="216" r="2.300" fill="#6967be" stroke="#fff" stroke-width="1.300"/>
          <circle cx="207.500" cy="272.500" r="1.600" fill="#c9c9e6" stroke="#fff" stroke-width=".8"/>
          <path d="M208.500 262L221 255.200" stroke="#fff" stroke-width="3.400" stroke-linecap="round"/><path d="M208.500 262.300L221 255.500" stroke="#dedcd0" stroke-width="1.400" stroke-linecap="round"/>
          <path d="M336 152.800l2.500-2h2l-1 2-2 1.500zM336 165.800l2.500-2h2l-1 2-2 1.500zM299 178.800l1.500-2h2.500l-1 2.500-2 1.300zM308 178.500l1.300-1.700h2l-1 2.500-1.500 1zM299 191.800l1.500-2h2.500l-1 2.500-2 1zM262 204.800l1.500-2h2.500l-1 2.500-2 1zM262 217.500l1.500-2h2.500l-1 2.500-2 1zM241 225l1.500-2h2l-1 2.500-1.500 1z" fill="#fff"/>
        </g>
        <g id="bracket">
          <g fill="#dcdcd8" stroke="#fff" stroke-width=".7"><circle cx="314.500" cy="265" r="1.700"/><circle cx="335" cy="279" r="1.700"/><circle cx="313.500" cy="278.500" r="1.500"/><circle cx="323" cy="284.500" r="1.500"/><circle cx="346.500" cy="295" r="2.300"/></g>
          <path d="M300 263.500L304.500 259 346.500 286.500V297.500L337 292 303 272.500z" fill="#c6c5cd" stroke="#fff" stroke-width="1"/>
          <path d="M304 260.500L345.500 288V296" fill="none" stroke="#6361b8" stroke-width=".7"/>
          <g fill="#d8d7e6" stroke="#fff" stroke-width=".8"><ellipse cx="312.700" cy="272" rx="2.400" ry="3.100"/><ellipse cx="323" cy="279" rx="2.400" ry="3.100"/><ellipse cx="334" cy="286" rx="2.400" ry="3.100"/></g>
          <path d="M313.500 270.500c-1.500 0-1.700 2-.5 3M323.800 277.500c-1.500 0-1.700 2-.5 3M334.800 284.500c-1.500 0-1.700 2-.5 3" stroke="#6361b8" stroke-width=".8" fill="none"/>
        </g>
      </defs>
      <use href="#plate" y="106"/>
      <use href="#bracket"/>
      <use href="#bracket" x="67" y="-46"/>
      <use href="#plate"/>
      <use href="#arm"/>
      <use href="#arm" x="165" y="111"/>
      <g stroke="#fff" stroke-width=".7">
        <g transform="translate(493 130) rotate(31)"><path d="M-11-7.800H11V7.800H-11C-17 7.800-17-7.800-11-7.800z" fill="url(#tube)"/><ellipse cx="11" rx="4.800" ry="7.800" fill="#d6d5cf"/><ellipse cx="11.500" rx="3.500" ry="6.200" fill="#efeeda" stroke="#8c8bc0" stroke-width=".5"/></g>
        <g transform="translate(532.500 156.700) rotate(31)"><path d="M-14-7.800H14V7.800H-14C-20 7.800-20-7.800-14-7.800z" fill="url(#tube)"/><ellipse cx="14" rx="4.800" ry="7.800" fill="#d6d5cf"/><ellipse cx="14.500" rx="3.500" ry="6.200" fill="#f5f4dc" stroke="#a9a8cc" stroke-width=".5"/></g>
      </g>
    </svg>

    <div class="vp-label">[−][SW Isometric][Conceptual]</div>
    <div class="vp-win">
      <button aria-label="Minimize drawing"><svg class="i8"><use href="#min"/></svg></button>
      <button aria-label="Restore drawing"><svg class="i8"><use href="#restore"/></svg></button>
      <button aria-label="Close drawing"><svg class="i8"><use href="#close"/></svg></button>
    </div>
    <div class="cube">
      <svg viewBox="0 0 58 52" aria-label="View cube" role="img">
        <ellipse cx="29" cy="29" rx="24" ry="17.500" fill="none" stroke="#4b525b" stroke-width="5"/>
        <g fill="#aaaeb2" font-family="Liberation Sans, sans-serif" font-weight="700" font-size="9"><text x="5" y="45" transform="rotate(-28 9 42)">W</text><text x="46" y="45" transform="rotate(32 48 42)">S</text><text x="9" y="19" font-size="7">N</text><text x="43" y="19" font-size="7">E</text></g>
        <path d="M29 2L14.500 12 16 27.500 29 36 42 27 44 11.500z" fill="#c9cacb"/>
        <path d="M29 2L14.500 12 29 21.500 44 11.500z" fill="#d6d7d7"/><path d="M29 21.500L44 11.500 42 27 29 36z" fill="#b7b8b9"/>
        <path d="M14.500 12L29 21.500 44 11.500M29 21.500V36" fill="none" stroke="#4c5157" stroke-width=".7" stroke-dasharray="2 1"/>
        <g fill="#50555a" font-family="Liberation Sans, sans-serif" font-size="5"><text x="24" y="14" transform="rotate(-25 29 12)">TOP</text><text x="17" y="24" transform="rotate(32 17 24)">LEFT</text><text x="31" y="29" font-size="4" transform="rotate(-35 31 29)">FRONT</text></g>
      </svg>
      <button class="wcs">WCS<svg class="i6"><use href="#caret"/></svg></button>
    </div>
    <div class="navbar">
      <i></i>
      <button aria-label="Steering wheel"><svg class="i14"><use href="#nw"/></svg></button>
      <svg class="i6"><use href="#caret"/></svg>
      <button class="line" aria-label="Pan"><svg class="i14"><use href="#pan"/></svg></button>
      <button aria-label="Zoom extents"><svg class="i14"><use href="#extents"/></svg></button>
      <svg class="i6"><use href="#caret"/></svg>
      <button class="on" aria-label="Orbit"><svg class="i14"><use href="#orbit"/></svg><svg class="i6"><use href="#caret"/></svg></button>
      <button aria-label="Show motion"><svg class="i14"><use href="#showm"/></svg></button>
      <i></i>
    </div>
    <svg class="ucs" viewBox="0 0 54 38" role="img" aria-label="UCS axes">
      <path d="M24 35L3 21" stroke="#86dd84" stroke-width="2.400"/><path d="M24 35L44 21" stroke="#cf5353" stroke-width="2.600"/><path d="M24 36V15" stroke="#4277bd" stroke-width="3"/><path d="M23 35V15" stroke="#8fb6e4" stroke-width=".8"/><circle cx="24" cy="15" r="1.500" fill="#b9e3fa"/>
      <path d="M1 12l3 4 3-4M4 16v3" fill="none" stroke="#1f7a2c"/><path d="M43 12l6 7M49 12l-6 7" stroke="#9e2630"/><path d="M24 5h6l-6 7.500h6.500" fill="none" stroke="#2458b0"/>
    </svg>
    <div class="command">
      <p>Press ESC or ENTER to exit, or right-click to display shortcut-menu.</p>
      <div class="cmdline">
        <div class="grip"><svg class="i8"><use href="#close"/></svg><svg class="i10"><use href="#wrench"/></svg></div>
        <svg class="i10"><use href="#orbit"/></svg><svg class="i6"><use href="#caret"/></svg>
        <input type="text" value="3DORBIT" aria-label="Command">
        <button aria-label="Command history"><svg class="i6"><use href="#caret-up"/></svg></button>
      </div>
    </div>
  </main>

  <div class="layouts">
    <button aria-label="First"><svg class="i8"><use href="#first"/></svg></button><button aria-label="Previous"><svg class="i8"><use href="#prev"/></svg></button><button aria-label="Next"><svg class="i8"><use href="#next"/></svg></button><button aria-label="Last"><svg class="i8"><use href="#last"/></svg></button>
    <button class="lt on">Model</button><button class="lt">Layout1</button><button class="lt">Layout2</button>
  </div>
  <footer class="status">Press ESC or ENTER to exit, or right-click to display shortcut-menu.</footer>

  <div class="taskbar">
    <div class="pins">
      <button aria-label="Start"><svg class="i10"><use href="#win"/></svg></button>
      <button aria-label="Search"><svg class="i10"><use href="#search"/></svg></button>
      <button aria-label="Task view"><svg class="i12"><use href="#tview"/></svg></button>
      <button aria-label="Edge"><svg class="i10"><use href="#edge"/></svg></button>
      <button aria-label="Media"><svg class="i10"><use href="#media"/></svg></button>
    </div>
    <div class="tasks">
      <button><svg><use href="#outlook"/></svg>Inbox - Outl...</button>
      <button><svg><use href="#chrome"/></svg>Cebe Cotta...</button>
      <button><svg><use href="#excel"/></svg>Microsoft E...</button>
      <button><svg><use href="#folder"/></svg>March 2016...</button>
      <button><svg><use href="#acad"/></svg>Swingarm li...</button>
      <button><svg><use href="#acad"/></svg>Swingarm L...</button>
      <button class="on"><svg><use href="#acad"/></svg>Drawing3.d...</button>
      <button><svg><use href="#paint"/></svg>Untitled - P...</button>
      <button><svg><use href="#pdf"/></svg>doc129655_...</button>
    </div>
    <div class="tray">
      <svg class="i10"><use href="#chev"/></svg><svg class="i10"><use href="#net"/></svg><svg class="i10"><use href="#batt"/></svg><svg class="i10"><use href="#sound"/></svg><svg class="i10"><use href="#action"/></svg>
      <span>ENG</span><time>10:51 AM</time>
    </div>
  </div>
</div>
</body>
</html>
```
FILE: styles.css
```css
* { box-sizing: border-box; }
body { margin: 0; font: 7px/9px Roboto, "Open Sans", sans-serif; color: #3a3a3a; background: #8c8c8c; }
button, input, select, output { font: inherit; color: inherit; margin: 0; padding: 0; border: 0; border-radius: 0; background: none; }
button { white-space: nowrap; }
select { appearance: none; flex: 1; min-width: 0; }
svg { display: block; flex: none; }
h2, p { margin: 0; font: inherit; }
.sprite { position: absolute; width: 0; height: 0; }
.i6 { width: 6px; height: 6px; }
.i8 { width: 8px; height: 8px; }
.i10 { width: 10px; height: 10px; }
.i12 { width: 12px; height: 10px; }
.i14 { width: 14px; height: 14px; }
.app { display: flex; flex-direction: column; height: 100vh; overflow: hidden; }

/* Title bar and ribbon tabs */
.top { display: flex; height: 26px; background: #3f3f3f; }
.app-menu { width: 24px; height: 24px; background: linear-gradient(#d0d0d0, #8c8c8c 50%, #b5b5b5); border: 1px solid #555; border-left: 0; }
.app-menu svg { width: 100%; height: 100%; }
.top-rows { flex: 1; min-width: 0; }
.titlebar { display: flex; height: 14px; background: linear-gradient(#9b9b9b, #6e6e6e); font-family: "Open Sans", sans-serif; }
.quick { display: flex; align-items: center; width: 116px; padding-left: 3px; color: #333; }
.quick button { width: 14px; display: flex; justify-content: center; }
.quick .slim { width: 8px; }
.quick svg { width: 10px; height: 10px; }
.quick .slim svg { width: 6px; height: 6px; }
.workspace { display: flex; align-items: center; gap: 2px; width: 105px; margin: 1px 0; padding: 0 1px; background: linear-gradient(#cfcfcf, #a2a2a2); border: 1px solid #5d5d5d; color: #161616; }
.qat-more { width: 9px; color: #000; }
.doc-title { flex: 1; display: flex; justify-content: center; align-items: center; gap: 6px; background: #fff; color: #222; white-space: nowrap; }
.infocenter { display: flex; align-items: center; gap: 3px; width: 261px; color: #333; }
.infocenter input { width: 106px; height: 12px; padding: 0 2px; background: #fff; font-style: italic; }
.infocenter input::placeholder { color: #666; }
.expander { padding-left: 2px; margin-right: -2px; }
.signin { display: flex; align-items: center; gap: 3px; flex: 1; color: #f6f6f6; }
.signin .push { margin-left: auto; color: #333; }
.infocenter .help { margin-left: 7px; }
.win-controls { display: flex; justify-content: space-around; width: 96px; padding: 0 2px 0 14px; background: #fff; color: #777; }
.menu { display: flex; height: 12px; padding-left: 2px; color: #e6e6e6; }
.menu button { padding: 0 5px 1px 6px; }
.menu .on { background: linear-gradient(#f4f4f4, #dcdcdc); color: #222; padding: 0 5px 1px; margin: 0 1px; }
.menu .rib { display: flex; align-items: center; gap: 1px; margin-left: 8px; }

/* Ribbon */
.ribbon { display: flex; height: 58px; padding: 1px 0 1px 2px; background: linear-gradient(#9b9b9b, #858585); }
.panel { display: flex; flex-direction: column; background: #fcfcfc; border-right: 2px solid #d9d9d9; }
.p-nav { width: 103px; }
.p-views { width: 111px; }
.p-style { width: 120px; }
.p-port { width: 102px; }
.p-pal { width: 161px; }
.p-ui { width: 167px; border: 0; }
.panel h2 { display: flex; justify-content: center; align-items: center; gap: 2px; position: relative; height: 10px; background: #ececec; border-top: 1px solid #e0e0e0; color: #444; }
.launch { position: absolute; right: 2px; }
.body { display: flex; flex: 1; min-height: 0; padding-top: 2px; }
.big { display: flex; flex-direction: column; align-items: center; align-self: flex-start; height: 42px; padding-top: 1px; }
.big > svg:first-child { width: 18px; height: 18px; margin-bottom: 2px; }
.w24 { width: 25px; }
.w30 { width: 30px; }
.w32 { width: 32px; }
.w38 { width: 38px; }
.grow { flex: 1; }
.off { color: #b5b5b5; }
.big.on { background: #abd0f3; border: 1px solid #6ba3d8; padding-top: 0; }
.drop { align-self: flex-end; margin: 0 -1px 13px; }
.stack { display: flex; flex-direction: column; }
.lead { margin-left: 5px; }
.row { display: flex; align-items: center; gap: 3px; height: 14px; }
.row > svg:first-child { width: 11px; height: 11px; }
.gallery { display: flex; width: 72px; height: 36px; margin: 2px 0 0 1px; border: 1px solid #d0d0d0; background: #fff; }
.names { flex: 1; padding-left: 1px; }
.names button { display: flex; align-items: center; gap: 1px; height: 11px; }
.names svg { width: 10px; height: 10px; }
.scroll { display: flex; flex-direction: column; width: 7px; border-left: 1px solid #d0d0d0; }
.scroll button { flex: 1; background: #f4f4f4; border-bottom: 1px solid #d8d8d8; }
.col { flex-direction: column; gap: 2px; padding: 3px 2px 0 1px; }
.combo { display: flex; align-items: center; gap: 2px; height: 12px; padding: 0 3px 0 1px; border: 1px solid #c9c9c9; background: #fff; }
.tools { display: flex; justify-content: space-between; height: 13px; }
.tools button { display: flex; align-items: center; gap: 1px; padding: 0 1px; border: solid #e4e4e4; border-width: 1px 0; background: #f7f7f7; }
.opacity { display: flex; gap: 2px; height: 12px; color: #c8c8c8; }
.opacity button { width: 13px; border: 1px solid #ccc; }
.meter { flex: 1; display: flex; align-items: center; justify-content: space-between; padding: 0 3px 0 4px; border: 1px solid #e2e2e2; background: linear-gradient(90deg, #ededed 51%, #fbfbfb 51%); }
.tiles { display: grid; grid-template-columns: 13px 13px; grid-auto-rows: 13px; gap: 1px; align-content: start; margin-left: 1px; }
.tiles button { display: flex; align-items: center; justify-content: center; border: 1px solid #dedede; background: #f6f6f6; }
.tiles button.on { background: #abd0f3; border-color: #5c9ad3; }
.tiles svg { width: 10px; height: 10px; }
.single { grid-template-columns: 13px; }
.ruled { border-left: 1px solid #dadada; margin-left: 4px; padding-left: 3px; }
.p-ui .body { padding-left: 4px; }

/* Drawing tabs: each is wider at its foot, with a thin dark outline */
.filetabs { display: flex; align-items: flex-end; height: 18px; padding: 0 0 1px 10px; background: linear-gradient(#8a8a8a, #a0a0a0); border-bottom: 2px solid #5e5e5e; }
.ft { position: relative; z-index: 0; width: 122px; height: 13px; padding: 0 9px; margin-right: -9px; color: #3f3f3f; text-align: left; }
.ft::before, .ft::after { content: ""; position: absolute; inset: 0; z-index: -1; background: #6e6e6e; clip-path: polygon(0 100%, 6px 0, calc(100% - 10px) 0, 100% 100%); }
.ft::after { inset: 1px 1px 0; background: linear-gradient(#929292, #8a8a8a); }
.ft:nth-child(2) { width: 114px; padding-left: 11px; }
.ft.on { display: flex; align-items: center; justify-content: space-between; width: 81px; padding: 0 12px 0 9px; color: #111; z-index: 1; }
.ft.on::after { background: linear-gradient(#dedede, #a8a8a8); }
.ft.on svg { color: #555; }
.ft.plus { width: 26px; padding: 1px 8px; }
.plus svg { width: 10px; height: 10px; }

/* Model space */
.viewport { --palm: none; position: relative; flex: 1; min-height: 0; border: solid #8e8e8e; border-width: 0 1px; background: #212830; overflow: hidden; }
.model { position: absolute; inset: 0 -1px; width: calc(100% + 2px); height: 100%; }
.vp-label { position: absolute; left: 3px; top: 6px; color: #e6e6e6; font-family: "Liberation Sans", sans-serif; }
.vp-win { position: absolute; right: 6px; top: 7px; display: flex; gap: 4px; color: #f4f4f4; }
.cube { position: absolute; right: 7px; top: 33px; display: flex; flex-direction: column; align-items: center; gap: 4px; }
.cube > svg { width: 58px; height: 52px; }
.wcs { display: flex; align-items: center; gap: 2px; height: 10px; padding: 0 2px; background: #8f919e; border: 1px solid #a7a9b3; border-radius: 2px; color: #e3e3e8; }
.navbar { position: absolute; right: 2px; top: 114px; display: flex; flex-direction: column; align-items: center; gap: 2px; width: 20px; padding: 1px; background: #9a9c9e; border: 1px solid #77797b; border-radius: 3px; color: #222; }
.navbar button { display: flex; flex-direction: column; align-items: center; width: 16px; }
.navbar i { width: 4px; height: 4px; margin: 0 1px; align-self: flex-end; border: 1px solid #55585b; border-radius: 50%; }
.navbar button:first-of-type { margin-top: 4px; }
.navbar .line { border-top: 1px solid #77797b; padding-top: 2px; }
.navbar .on { background: #b5d9f8; border: 1px solid #5da4e0; }
.ucs { position: absolute; left: 6px; bottom: 29px; width: 54px; height: 38px; }
.command { position: absolute; left: 20%; right: 20%; bottom: 0; font-family: "DejaVu Sans Mono", monospace; }
.command p { width: max-content; margin: 0 0 1px 35px; padding: 0 2px 1px; background: rgba(100, 103, 107, .85); color: #dcdcdc; }
.cmdline { display: flex; align-items: center; gap: 1px; height: 16px; margin-left: 1px; background: #fff; border: 1px solid #999; border-left: 0; color: #111; }
.grip { display: flex; align-items: center; gap: 4px; width: 32px; height: 100%; padding-left: 4px; margin-right: 2px; border-left: 3px dotted #999; background: linear-gradient(#858585, #555); color: #fff; }
.cmdline input { flex: 1; min-width: 0; height: 12px; outline: 0; }
.cmdline button { padding: 0 3px; }

/* Layout tabs and status */
.layouts { display: flex; align-items: center; height: 10px; padding-left: 2px; background: #efefef; font-family: "Liberation Sans", sans-serif; color: #222; }
.layouts button:not(.lt) { width: 9px; height: 9px; border-right: 1px solid #bbb; }
.lt { height: 10px; padding: 0 5px 0 3px; background: linear-gradient(108deg, transparent calc(100% - 3px), #555 calc(100% - 3px), #555 calc(100% - 2px), transparent calc(100% - 2px)); }
.lt.on { padding: 0 5px; background: #212830; color: #fff; clip-path: polygon(0 0, 100% 0, calc(100% - 3px) 100%, 3px 100%); }
.status { height: 14px; padding: 2px 4px; background: linear-gradient(#787878, #9a9a9a); border-top: 1px solid #b5b5b5; font-family: "Liberation Sans", sans-serif; font-size: 6px; color: #1d1d1d; }

/* Taskbar */
.taskbar { display: flex; height: 17px; background: #0d0b0c; color: #f4f4f4; font-family: "Open Sans", sans-serif; }
.pins { display: flex; width: 105px; }
.pins button { display: flex; align-items: center; justify-content: center; width: 21px; }
.tasks { display: flex; flex: 1; min-width: 0; gap: 5px; padding-left: 2px; }
.tasks button { flex: 1 1 0; min-width: 0; display: flex; align-items: center; gap: 2px; padding-left: 1px; overflow: hidden; border-bottom: 2px solid #6caee2; }
.tasks svg { width: 10px; height: 10px; }
.tasks .on { background: #3d3d3e; }
.tray { display: flex; align-items: center; gap: 4px; width: 142px; padding-left: 3px; }
.tray time { margin-left: auto; padding-right: 12px; }
```
